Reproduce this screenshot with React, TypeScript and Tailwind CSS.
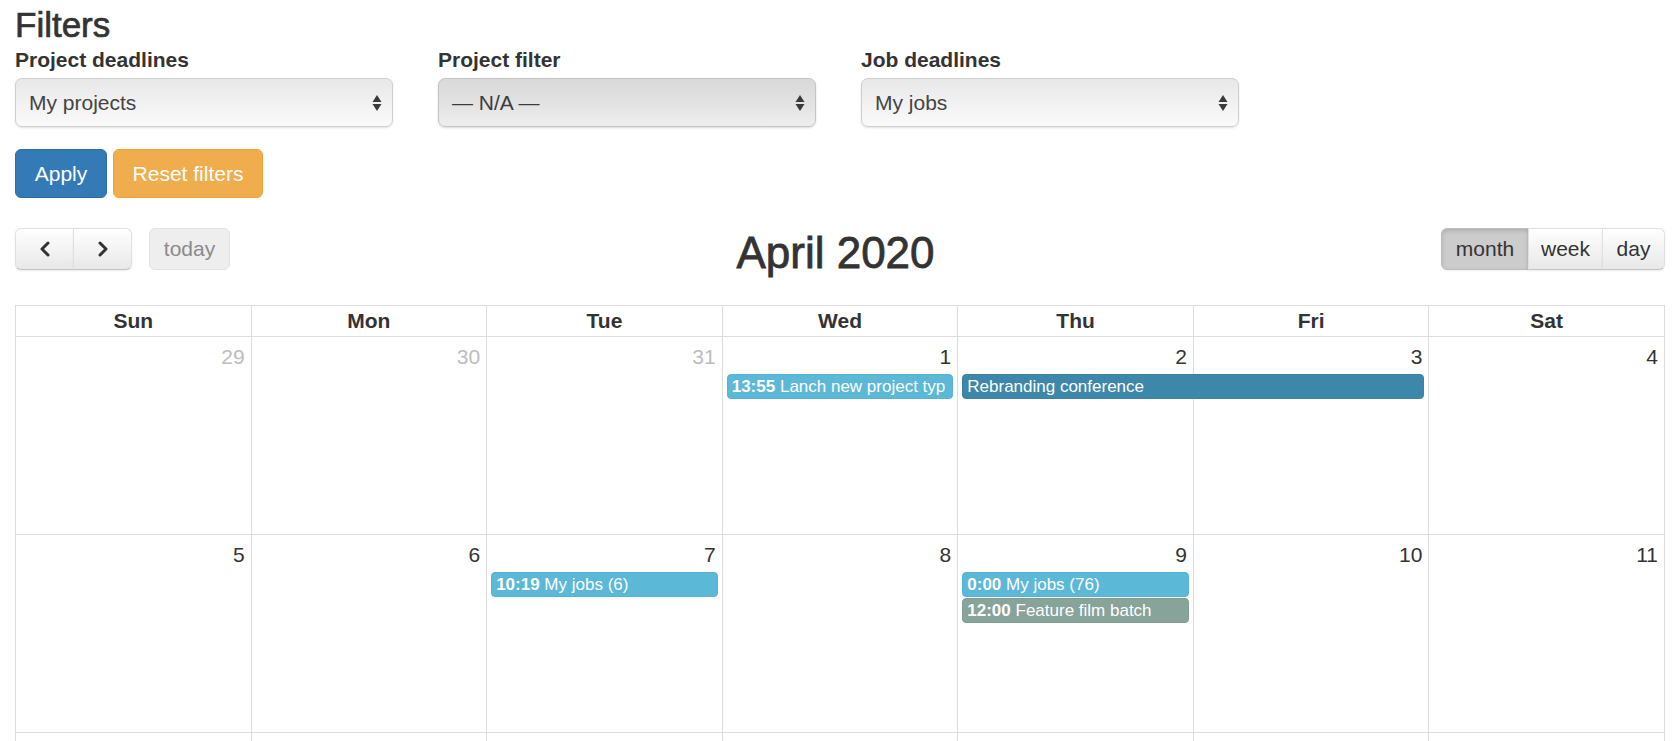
import React from "react";

type Ev = { place: string; time?: string; title: string; color: string };

const days = ["Sun", "Mon", "Tue", "Wed", "Thu", "Fri", "Sat"];
const colStart = [
  "col-start-1",
  "col-start-2",
  "col-start-3",
  "col-start-4",
  "col-start-5",
  "col-start-6",
  "col-start-7",
];

const weeks: { nums: (number | null)[]; other: boolean[]; events: Ev[]; h: string }[] = [
  {
    nums: [29, 30, 31, 1, 2, 3, 4],
    other: [true, true, true, false, false, false, false],
    h: "h-[198px]",
    events: [
      {
        place: "col-start-4 col-span-1 row-start-2",
        time: "13:55",
        title: "Lanch new project typ",
        color: "bg-[#5bb8d7] border-[#55b3d3]",
      },
      {
        place: "col-start-5 col-span-2 row-start-2",
        title: "Rebranding conference",
        color: "bg-[#3d87aa] border-[#3a83a5]",
      },
    ],
  },
  {
    nums: [5, 6, 7, 8, 9, 10, 11],
    other: [false, false, false, false, false, false, false],
    h: "h-[198px]",
    events: [
      {
        place: "col-start-3 col-span-1 row-start-2",
        time: "10:19",
        title: "My jobs (6)",
        color: "bg-[#5bb8d7] border-[#55b3d3]",
      },
      {
        place: "col-start-5 col-span-1 row-start-2",
        time: "0:00",
        title: "My jobs (76)",
        color: "bg-[#5bb8d7] border-[#55b3d3]",
      },
      {
        place: "col-start-5 col-span-1 row-start-3",
        time: "12:00",
        title: "Feature film batch",
        color: "bg-[#87a39a] border-[#819e95]",
      },
    ],
  },
  {
    nums: [null, null, null, null, null, null, null],
    other: [false, false, false, false, false, false, false],
    h: "h-[20px]",
    events: [],
  },
];

function Arrows() {
  return (
    <svg width="10" height="18" viewBox="0 0 10 18" className="shrink-0">
      <path d="M5 1 L9.5 8 L0.5 8 Z" fill="#3a3a3a" />
      <path d="M0.5 10 L9.5 10 L5 17 Z" fill="#3a3a3a" />
    </svg>
  );
}

function FakeSelect({ label, value, dim }: { label: string; value: string; dim?: boolean }) {
  return (
    <div className="w-[378px] flex flex-col">
      <div className="mt-[4px] text-[21px] leading-[24px] font-bold text-[#333]">{label}</div>
      <div
        className={
          "mt-[6px] h-[49px] rounded-[7px] border flex items-center justify-between pl-[13px] pr-[10px] text-[21px] " +
          (dim
            ? "border-[#c4c4c4] bg-linear-to-b from-[#d9d9d9] via-[#e2e2e2] to-[#eeeeee] text-[#3c3c3c] shadow-[0_1px_2px_rgba(0,0,0,0.15)]"
            : "border-[#cfcfcf] bg-linear-to-b from-[#e8e8e8] via-[#f1f1f1] to-[#fafafa] text-[#444] shadow-[0_1px_2px_rgba(0,0,0,0.12)]")
        }
      >
        <span>{value}</span>
        <Arrows />
      </div>
    </div>
  );
}

function Chevron({ dir }: { dir: "left" | "right" }) {
  return (
    <svg width="14" height="16" viewBox="0 0 14 16">
      {dir === "left" ? (
        <path d="M10 2 L4 8 L10 14" fill="none" stroke="#333" strokeWidth="3" strokeLinecap="round" strokeLinejoin="round" />
      ) : (
        <path d="M4 2 L10 8 L4 14" fill="none" stroke="#333" strokeWidth="3" strokeLinecap="round" strokeLinejoin="round" />
      )}
    </svg>
  );
}

const fcBtn =
  "h-[42px] flex items-center justify-center border border-[#e0e0e0] border-b-[#c2c2c2] text-[21px] text-[#333] bg-linear-to-b from-white to-[#e8e8e8] shadow-[inset_0_1px_0_rgba(255,255,255,0.2),0_1px_2px_rgba(0,0,0,0.08)]";

export default function App() {
  return (
    <div className="w-[1680px] h-[741px] overflow-hidden bg-white px-[15px] font-['Liberation_Sans',Arial,sans-serif] text-[#333]">
      <h3 className="pt-[6px] text-[35px] leading-[38px] font-normal text-[#333] [-webkit-text-stroke:0.7px_#333]">
        Filters
      </h3>

      <div className="flex gap-[45px]">
        <FakeSelect label="Project deadlines" value="My projects" />
        <FakeSelect label="Project filter" value="— N/A —" dim />
        <FakeSelect label="Job deadlines" value="My jobs" />
      </div>

      <div className="mt-[22px] flex gap-[6px]">
        <button className="w-[92px] h-[49px] rounded-[6px] border border-[#2e6da4] bg-[#337ab7] text-white text-[21px]">
          Apply
        </button>
        <button className="w-[150px] h-[49px] rounded-[6px] border border-[#eea236] bg-[#f0ad4e] text-white text-[21px]">
          Reset filters
        </button>
      </div>

      <div className="mt-[30px] flex items-start">
        <div className="flex gap-[17px]">
          <div className="flex">
            <button className={fcBtn + " w-[59px] rounded-l-[6px]"}>
              <Chevron dir="left" />
            </button>
            <button className={fcBtn + " w-[59px] rounded-r-[6px] -ml-px"}>
              <Chevron dir="right" />
            </button>
          </div>
          <button className="h-[42px] w-[81px] rounded-[6px] border border-[#e2e2e2] bg-[#eeeeee] text-[21px] text-[#8a8a8a]">
            today
          </button>
        </div>
        <div className="flex-1 flex justify-center">
          <h2 className="text-[44px] leading-[49px] font-normal text-[#333] [-webkit-text-stroke:0.8px_#333]">
            April 2020
          </h2>
        </div>
        <div className="flex">
          <button className="h-[42px] w-[88px] rounded-l-[6px] border border-[#bdbdbd] bg-[#cccccc] text-[21px] text-[#333] shadow-[inset_0_2px_4px_rgba(0,0,0,0.15),0_1px_2px_rgba(0,0,0,0.05)]">
            month
          </button>
          <button className={fcBtn + " w-[75px] -ml-px"}>week</button>
          <button className={fcBtn + " w-[63px] rounded-r-[6px] -ml-px"}>day</button>
        </div>
      </div>

      <div className="mt-[28px] border-l border-t border-[#dddddd]">
        <div className="grid grid-cols-7">
          {days.map((d) => (
            <div
              key={d}
              className="h-[31px] flex items-center justify-center border-r border-b border-[#dddddd] text-[21px] font-bold text-[#333]"
            >
              {d}
            </div>
          ))}
        </div>
        {weeks.map((w, wi) => (
          <div key={wi} className={"grid grid-cols-7 grid-rows-[37px_26px_26px_1fr] " + w.h}>
            {w.nums.map((n, i) => (
              <div
                key={i}
                className={
                  colStart[i] +
                  " row-start-1 row-span-4 border-r border-b border-[#dddddd] text-right pr-[6px] pt-[5px] text-[21px] leading-[30px] " +
                  (w.other[i] ? "text-[#bdbdbd]" : "text-[#333]")
                }
              >
                {n}
              </div>
            ))}
            {w.events.map((e, ei) => (
              <div
                key={ei}
                className={
                  e.place +
                  " " +
                  e.color +
                  " ml-[4px] mr-[5px] h-[25px] self-start rounded-[4px] border px-[4px] text-[17px] leading-[23px] text-white whitespace-nowrap overflow-hidden"
                }
              >
                {e.time && <span className="font-bold">{e.time} </span>}
                {e.title}
              </div>
            ))}
          </div>
        ))}
      </div>
    </div>
  );
}
